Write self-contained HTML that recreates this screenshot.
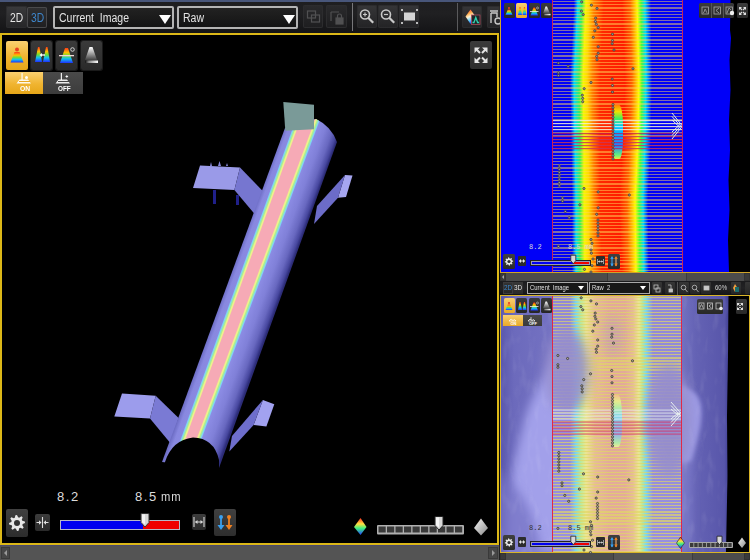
<!DOCTYPE html><html><head><meta charset="utf-8"><style>
*{margin:0;padding:0;box-sizing:border-box}
html,body{width:750px;height:560px;overflow:hidden;background:#0c0c0c;font-family:"Liberation Sans",sans-serif}
.a{position:absolute}
.btn{position:absolute;background:linear-gradient(#363638,#232325);border-radius:2px;box-shadow:inset 0 0 0 1px #2c2c2e}
.dd{position:absolute;border:2px solid #b4b4b4;border-radius:2px;background:linear-gradient(#222,#141414);color:#e4e4e4;overflow:hidden}
.dd span{position:absolute;left:4px;top:3px;font-size:12.5px;line-height:14px;transform:scaleX(.84);transform-origin:0 0;white-space:nowrap}
.tri{position:absolute;width:0;height:0;border-left:8px solid transparent;border-right:8px solid transparent;border-top:10px solid #fff}
svg{position:absolute;overflow:visible}
</style></head><body>
<div class="a" style="left:0;top:0;width:500px;height:33px;background:linear-gradient(#1e1e20,#202022 40%,#141416)"></div>
<div class="a" style="left:0;top:0;width:500px;height:1.5px;background:#48567a"></div>
<div class="btn" style="left:6px;top:6px;width:21px;height:22px;background:linear-gradient(#3a3a3c,#262628)"></div>
<div class="btn" style="left:27px;top:7px;width:20px;height:21px;background:linear-gradient(#303032,#1e1e20);box-shadow:inset 0 0 0 1px #4a4a4c"></div>
<div class="a" style="left:10px;top:11px;font-size:13.5px;line-height:13px;color:#e6e6e6;transform:scaleX(.76);transform-origin:0 0">2D</div>
<div class="a" style="left:31px;top:11px;font-size:13.5px;line-height:13px;color:#3e86cc;transform:scaleX(.76);transform-origin:0 0">3D</div>
<div class="dd" style="left:53px;top:6px;width:121px;height:23px"><span>Current&nbsp; Image</span><div class="tri" style="left:104px;top:7px;border-left-width:6px;border-right-width:6px;border-top-width:9px"></div></div>
<div class="dd" style="left:177px;top:6px;width:121px;height:23px"><span>Raw</span><div class="tri" style="left:104px;top:7px;border-left-width:6px;border-right-width:6px;border-top-width:9px"></div></div>
<div class="btn" style="left:303px;top:5px;width:20px;height:23px;background:linear-gradient(#2a2a2c,#1e1e20)"></div>
<div class="btn" style="left:326px;top:5px;width:21px;height:23px;background:linear-gradient(#2a2a2c,#1e1e20)"></div>
<svg style="left:303px;top:5px" width="20" height="23"><g fill="none" stroke="#505052" stroke-width="1.2"><rect x="4.5" y="6" width="8" height="7"/><rect x="8.5" y="10" width="8" height="7"/></g></svg>
<svg style="left:326px;top:5px" width="21" height="23"><g fill="none" stroke="#505052" stroke-width="1.2"><path d="M5 7h8M5 7v9"/><rect x="10" y="13" width="7" height="6" fill="#505052"/><path d="M11.5 13v-2a2 2 0 0 1 4 0v2"/></g></svg>
<div class="a" style="left:352px;top:3px;width:1px;height:28px;background:#77777a"></div>
<div class="btn" style="left:357px;top:5px;width:20px;height:23px"></div>
<div class="btn" style="left:378px;top:5px;width:20px;height:23px"></div>
<div class="btn" style="left:399px;top:5px;width:20px;height:23px"></div>
<svg style="left:357px;top:5px" width="20" height="23"><g fill="none" stroke="#c8c8c8" stroke-width="1.6"><circle cx="8" cy="9.5" r="4.5"/><path d="M11.2 12.8l5 5" stroke-width="2.2"/><path d="M6 9.5h4M8 7.5v4" stroke-width="1.2"/></g></svg>
<svg style="left:378px;top:5px" width="20" height="23"><g fill="none" stroke="#c8c8c8" stroke-width="1.6"><circle cx="8" cy="9.5" r="4.5"/><path d="M11.2 12.8l5 5" stroke-width="2.2"/><path d="M6 9.5h4" stroke-width="1.2"/></g></svg>
<svg style="left:399px;top:5px" width="21" height="23"><rect x="5" y="7.5" width="11" height="8" fill="#d4d4d4"/><g fill="#bbb"><rect x="2" y="4" width="2" height="2"/><rect x="17" y="4" width="2" height="2"/><rect x="2" y="17" width="2" height="2"/><rect x="17" y="17" width="2" height="2"/></g></svg>
<div class="a" style="left:457px;top:3px;width:1px;height:28px;background:#5a5a5c"></div>
<div class="btn" style="left:462px;top:6px;width:20px;height:22px"></div>
<svg style="left:462px;top:6px" width="20" height="22"><defs><linearGradient id="rb" x1=".2" y1="0" x2=".5" y2="1"><stop offset="0" stop-color="#ff4030"/><stop offset=".3" stop-color="#ffb050"/><stop offset=".5" stop-color="#fff0d0"/><stop offset=".75" stop-color="#60d0ff"/><stop offset="1" stop-color="#2040ff"/></linearGradient></defs><path d="M8.5 3.5l5 7-5 7.5-5-7.5z" fill="url(#rb)"/><rect x="9.5" y="9" width="8.5" height="9.5" fill="#1c2828" stroke="#b04a5a" stroke-width=".8"/><path d="M10.5 16.5h1.5l1.8-5 1.8 5h1.5" fill="none" stroke="#30d0b0" stroke-width="1.3"/></svg>
<div class="btn" style="left:487px;top:6px;width:13px;height:22px"></div>
<svg style="left:487px;top:6px" width="13" height="22"><g fill="none" stroke="#c8c8c8" stroke-width="1.4"><path d="M3 5h8M4 7v10M4 7h6v4"/><circle cx="11" cy="15" r="3"/></g></svg>
<div class="a" style="left:0;top:33px;width:499px;height:512px;background:#000;border:2px solid #dcb818;border-top-width:2px"></div>
<svg style="left:0;top:0" width="500" height="545" viewBox="0 0 500 545">
<defs>
<linearGradient id="rodg" gradientUnits="userSpaceOnUse" x1="221.25" y1="300" x2="272" y2="318.5">
<stop offset="0" stop-color="#6c6cc4"/><stop offset=".08" stop-color="#8888e0"/><stop offset=".5" stop-color="#9090e8"/>
<stop offset=".72" stop-color="#8080d8"/><stop offset=".86" stop-color="#6868c0"/><stop offset=".95" stop-color="#4848a0"/><stop offset="1" stop-color="#2c2c78"/>
</linearGradient>
<clipPath id="rodclip"><path d="M285,128 L162,462 L219,468 L337,142 Q331,126 316,119 Z"/></clipPath>
<filter id="sb" x="-20%" y="-5%" width="140%" height="110%"><feGaussianBlur stdDeviation=".7"/></filter>
</defs>
<polygon points="200,165.6 240,167.5 234.4,190 193,188" fill="#9a9ae8"/>
<polygon points="240,167.5 263,191.25 254.4,213.75 234.4,190" fill="#7676d0"/>
<path d="M213 190h3v14h-3zM236 195h3v10h-3z" fill="#20208a"/>
<path d="M210 166l1-4 1 4zM218 166l1.5-5 1.5 5zM226 166l1-3 1 3z" fill="#8888dd"/>
<polygon points="345,175 352.5,175.6 346,197 338,197.7" fill="#a6a6f0"/>
<polygon points="345,175 338,197.7 314,224 317,206" fill="#6c6cc8"/>
<polygon points="122,393.6 155.7,395.7 150,418.6 114.3,416.4" fill="#9c9cec"/>
<polygon points="155.7,395.7 178.6,417.9 170.7,443.6 150,418.6" fill="#7a7ad4"/>
<polygon points="262.9,400 274.3,404.3 266.4,426.4 253.6,425" fill="#a2a2f0"/>
<polygon points="262.9,400 253.6,425 229.3,451.4 232,436" fill="#6e6ecc"/>
<path d="M285,128 L162,462 L219,468 L337,142 Q331,126 316,119 Z" fill="url(#rodg)"/>
<g clip-path="url(#rodclip)"><g filter="url(#sb)">
<polygon points="299.3,110.0 323.5,110.0 188.1,475.0 167.9,475.0" fill="#80d4f4"/>
<polygon points="300.7,110.0 322.1,110.0 186.7,475.0 169.3,475.0" fill="#a8f094"/>
<polygon points="302.2,110.0 320.5,110.0 185.1,475.0 170.8,475.0" fill="#f0f08c"/>
<polygon points="303.9,110.0 318.7,110.0 183.3,475.0 172.5,475.0" fill="#f6aab6"/>
</g></g>
<path d="M165,462 Q172,440 193,437.5 Q214,438 219,460 L219,470 L165,470 Z" fill="#000"/>
<polygon points="283.3,102 314,104.7 314,129.3 285.3,130.7" fill="#7a9a98"/>
</svg>
<div class="a" style="left:6px;top:41px;width:22px;height:29px;border-radius:2px;background:linear-gradient(#fad070,#f0b430 55%,#e6a618)"></div>
<div class="a" style="left:31px;top:41px;width:21px;height:29px;border-radius:2px;background:linear-gradient(#3a3a3a,#2a2a2a);box-shadow:0 0 0 1px #1a1a1a"></div>
<div class="a" style="left:56px;top:41px;width:21px;height:29px;border-radius:2px;background:linear-gradient(#3a3a3a,#2a2a2a);box-shadow:0 0 0 1px #1a1a1a"></div>
<div class="a" style="left:81px;top:41px;width:21px;height:29px;border-radius:2px;background:linear-gradient(#3a3a3a,#2a2a2a);box-shadow:0 0 0 1px #1a1a1a"></div>
<svg style="left:0;top:0" width="110" height="100"><defs><linearGradient id="rbv" x1="0" y1="0" x2="0" y2="1"><stop offset="0" stop-color="#ff3818"/><stop offset=".3" stop-color="#ffc000"/><stop offset=".5" stop-color="#70e030"/><stop offset=".72" stop-color="#10c0f0"/><stop offset="1" stop-color="#2030ff"/></linearGradient><linearGradient id="cone" x1="0" y1="0" x2="0" y2="1"><stop offset="0" stop-color="#ffffff"/><stop offset=".3" stop-color="#c8c8c8"/><stop offset="1" stop-color="#404040"/></linearGradient><linearGradient id="conebar" x1="0" y1="0" x2="1" y2="0"><stop offset="0" stop-color="#101010"/><stop offset=".3" stop-color="#888"/><stop offset="1" stop-color="#fff"/></linearGradient></defs><circle cx="17" cy="49.5" r="2" fill="#e84020"/><polygon points="14.5,52 19.5,52 23.5,62.5 10.5,62.5" fill="url(#rbv)"/><polygon points="38,47 39.5,47 42,62 35,62" fill="url(#rbv)"/><polygon points="46,47 47.5,47 50,62 43,62" fill="url(#rbv)"/><path d="M45 55h-4" stroke="#fff" stroke-width="1.3"/><path d="M39.5 55l2.5-2v4z" fill="#fff"/><polygon points="65,48 68,48 73,63 60,63" fill="url(#rbv)"/><rect x="59" y="55" width="15" height="1.3" fill="#f0d8d8"/><circle cx="72.5" cy="49.5" r="1.8" fill="none" stroke="#ddd" stroke-width=".9"/><polygon points="89.5,47 92.5,47 97,60 85,60" fill="url(#cone)"/><rect x="85" y="60.5" width="13" height="2.5" fill="url(#conebar)"/></svg>
<div class="a" style="left:5px;top:72px;width:38px;height:22px;background:linear-gradient(#fad070,#f0b430 55%,#e6a618)"></div>
<div class="a" style="left:43px;top:72px;width:40px;height:22px;background:linear-gradient(#4a4a4a,#3c3c3c)"></div>
<svg style="left:0;top:0" width="90" height="100"><g fill="#fff"><path d="M19.5 79.5h8.5l3 4h-14.5z" opacity=".9"/><rect x="21.5" y="73" width="1.1" height="7"/><circle cx="26.5" cy="77.5" r="1.5"/><path d="M58.5 79.5h8.5l3 4h-14.5z" opacity=".9"/><rect x="60.8" y="73" width="1.1" height="7"/><path d="M65.5 76.5h2.6M66.8 75.2v2.6" stroke="#fff" stroke-width=".9"/></g><g fill="#e8a820"><rect x="19" y="81" width="11" height="1"/></g><g fill="#444"><rect x="58" y="81" width="11" height="1"/></g></svg>
<div class="a" style="left:19.5px;top:85px;font-size:7.5px;line-height:8px;font-weight:bold;color:#fff;transform:scaleX(.9);transform-origin:0 0">ON</div>
<div class="a" style="left:57.5px;top:85px;font-size:7.5px;line-height:8px;font-weight:bold;color:#fff;transform:scaleX(.85);transform-origin:0 0">OFF</div>
<div class="a" style="left:470px;top:41px;width:22px;height:28px;border-radius:2px;background:linear-gradient(#3a3a3a,#2c2c2c)"></div>
<svg style="left:470px;top:41px" width="22" height="28"><g fill="#e4e4e4"><path d="M4.5 6.5h5.5l-5.5 5.5zM17.5 6.5h-5.5l5.5 5.5zM4.5 22h5.5l-5.5-5.5zM17.5 22h-5.5l5.5-5.5z"/></g><g stroke="#e4e4e4" stroke-width="2"><path d="M6 8l4 4M16 8l-4 4M6 20.5l4-4M16 20.5l-4-4"/></g></svg>
<div class="a" style="left:6px;top:509px;width:22px;height:28px;border-radius:2px;background:linear-gradient(#404040,#2c2c2c)"></div>
<svg style="left:0;top:480px" width="260" height="65"><polygon points="24.84,41.41 25.00,42.97 22.65,44.10 22.33,45.18 23.67,47.42 22.68,48.64 20.22,47.78 19.22,48.31 18.59,50.84 17.03,51.00 15.90,48.65 14.82,48.33 12.58,49.67 11.36,48.68 12.22,46.22 11.69,45.22 9.16,44.59 9.00,43.03 11.35,41.90 11.67,40.82 10.33,38.58 11.32,37.36 13.78,38.22 14.78,37.69 15.41,35.16 16.97,35.00 18.10,37.35 19.18,37.67 21.42,36.33 22.64,37.32 21.78,39.78 22.31,40.78" fill="#e8e8e8"/><circle cx="17" cy="43" r="3" fill="#333"/></svg>
<div class="a" style="left:35px;top:514px;width:15px;height:17px;border-radius:2px;background:linear-gradient(#3c3c3c,#2a2a2a)"></div>
<svg style="left:35px;top:514px" width="15" height="17"><g stroke="#e0e0e0" fill="#e0e0e0" stroke-width="1.1"><path d="M7.5 3v11"/><path d="M1.5 8.5h4.5M13.5 8.5h-4.5"/><path d="M6.5 8.5l-2.5-2.2v4.4z M8.5 8.5l2.5-2.2v4.4z" stroke="none"/></g></svg>
<div class="a" style="left:60px;top:520px;width:120px;height:10px;border:1px solid #b8b8c8;background:linear-gradient(to right,#0000f0 0,#0000f0 82px,#f00000 82px)"></div>
<svg style="left:138px;top:511px" width="14" height="18"><path d="M3 2.5h8v9l-4 4.5-4-4.5z" fill="#d8d8d8" stroke="#333" stroke-width="1"/><path d="M4 3.5h3v10l-3-2.5z" fill="#f4f4f4"/></svg>
<div class="a" style="left:57px;top:489.5px;font-size:13px;line-height:13px;letter-spacing:1.6px;color:#dcdcdc;white-space:pre">8.2</div>
<div class="a" style="left:135px;top:489.5px;font-size:13px;line-height:13px;letter-spacing:1.6px;color:#dcdcdc;white-space:pre">8.5</div>
<div class="a" style="left:160.5px;top:489.5px;font-size:13px;line-height:13px;letter-spacing:1.2px;color:#dcdcdc;white-space:pre;transform:scaleX(.86);transform-origin:0 0">mm</div>
<div class="a" style="left:192px;top:514px;width:14px;height:16px;border-radius:2px;background:linear-gradient(#3c3c3c,#2a2a2a)"></div>
<svg style="left:192px;top:514px" width="14" height="16"><g stroke="#d8d8d8" fill="#d8d8d8" stroke-width="1.1"><path d="M2 3v10M12 3v10M3.5 8h7"/><path d="M3 8l2.5-2v4zM11 8l-2.5-2v4z" stroke="none"/></g></svg>
<div class="a" style="left:214px;top:509px;width:22px;height:27px;border-radius:2px;background:linear-gradient(#404040,#2e2e2e)"></div>
<svg style="left:214px;top:509px" width="22" height="27"><g stroke-width="1.8"><circle cx="7" cy="8" r="2" fill="#3aa0f0"/><path d="M7 9v10" stroke="#3aa0f0"/><path d="M3.5 16l3.5 5 3.5-5z" fill="#3aa0f0"/><circle cx="15" cy="8" r="2" fill="#f08020"/><path d="M15 9v10" stroke="#f08020"/><path d="M11.5 16l3.5 5 3.5-5z" fill="#f08020"/></g></svg>
<svg style="left:350px;top:514px" width="20" height="24"><defs><linearGradient id="dia" x1="0" y1="0" x2="0" y2="1"><stop offset="0" stop-color="#ff3020"/><stop offset=".35" stop-color="#ffe040"/><stop offset=".6" stop-color="#40f080"/><stop offset="1" stop-color="#2040ff"/></linearGradient></defs><path d="M10.5 4l6 9-6 8-6.5-8z" fill="url(#dia)"/></svg>
<svg style="left:377px;top:525px" width="87" height="10"><rect x="0" y="0" width="87" height="9.5" rx="1" fill="#b0b0b0"/><rect x="1.50" y="1.5" width="7.2" height="6" fill="#3a3a3a"/><rect x="10.00" y="1.5" width="7.2" height="6" fill="#3a3a3a"/><rect x="18.50" y="1.5" width="7.2" height="6" fill="#3a3a3a"/><rect x="27.00" y="1.5" width="7.2" height="6" fill="#3a3a3a"/><rect x="35.50" y="1.5" width="7.2" height="6" fill="#3a3a3a"/><rect x="44.00" y="1.5" width="7.2" height="6" fill="#3a3a3a"/><rect x="52.50" y="1.5" width="7.2" height="6" fill="#3a3a3a"/><rect x="61.00" y="1.5" width="7.2" height="6" fill="#3a3a3a"/><rect x="69.50" y="1.5" width="7.2" height="6" fill="#3a3a3a"/><rect x="78.00" y="1.5" width="7.2" height="6" fill="#3a3a3a"/></svg>
<svg style="left:432px;top:514px" width="14" height="18"><path d="M3 2.5h8v9l-4 4.5-4-4.5z" fill="#d8d8d8" stroke="#222" stroke-width="1"/><path d="M4 3.5h3v10l-3-2.5z" fill="#f4f4f4"/></svg>
<svg style="left:470px;top:514px" width="22" height="24"><defs><linearGradient id="gd" x1="0" y1="0" x2="1" y2="1"><stop offset="0" stop-color="#f8f8f8"/><stop offset="1" stop-color="#888"/></linearGradient></defs><path d="M11 4.5l7 9.5-7 7.5-7-7.5z" fill="url(#gd)"/></svg>
<div class="a" style="left:0;top:545px;width:499px;height:15px;background:#545454;border-top:1px solid #4a4a70"></div>
<div class="a" style="left:1px;top:547px;width:9px;height:12px;background:#474747;border:1px solid #3a3a3a"></div>
<svg style="left:1px;top:547px" width="9" height="12"><path d="M6 3l-3 3 3 3z" fill="#999"/></svg>
<div class="a" style="left:488px;top:547px;width:10px;height:12px;background:#474747;border:1px solid #3a3a3a"></div>
<svg style="left:488px;top:547px" width="10" height="12"><path d="M4 3l3 3-3 3z" fill="#999"/></svg>
<div class="a" style="left:499px;top:545px;width:1px;height:15px;background:#222"></div>
<div class="a" style="left:500px;top:0;width:250px;height:273px;background:#000"></div>
<svg style="left:500px;top:0" width="250" height="273"><path d="M1 0H230.5L230 30L231 38L229.5 60L230.5 90L229 120L230 150L228.5 180L229.5 210L228 240L229 272H1Z" fill="#0000f8"/></svg>
<div class="a" style="left:553px;top:0;width:129px;height:272px"><div style="position:absolute;left:0;top:0px;width:129px;height:8px;background:linear-gradient(to right,#0000f8 20.8px,#00d8ff 24.8px,#30f060 28.9px,#f8f800 32.9px,#ffd800 35.9px,#ff8000 40.9px,#ff2800 50.8px,#ff1c00 69.1px,#ff6000 77.1px,#ffff00 84.1px,#40ff40 88.0px,#00d8ff 92.0px,#0000f8 98.0px)"></div><div style="position:absolute;left:0;top:8px;width:129px;height:8px;background:linear-gradient(to right,#0000f8 20.4px,#00d8ff 24.4px,#30f060 28.5px,#f8f800 32.5px,#ffd800 35.7px,#ff8000 40.7px,#ff2800 50.4px,#ff1c00 69.5px,#ff6000 77.3px,#ffff00 84.3px,#40ff40 88.1px,#00d8ff 92.1px,#0000f8 98.1px)"></div><div style="position:absolute;left:0;top:16px;width:129px;height:8px;background:linear-gradient(to right,#0000f8 20.0px,#00d8ff 24.0px,#30f060 28.2px,#f8f800 32.2px,#ffd800 35.5px,#ff8000 40.5px,#ff2800 50.0px,#ff1c00 69.8px,#ff6000 77.5px,#ffff00 84.5px,#40ff40 88.2px,#00d8ff 92.2px,#0000f8 98.2px)"></div><div style="position:absolute;left:0;top:24px;width:129px;height:8px;background:linear-gradient(to right,#0000f8 19.6px,#00d8ff 23.6px,#30f060 28.0px,#f8f800 32.0px,#ffd800 35.3px,#ff8000 40.3px,#ff2800 49.6px,#ff1c00 70.0px,#ff6000 77.7px,#ffff00 84.7px,#40ff40 88.4px,#00d8ff 92.4px,#0000f8 98.4px)"></div><div style="position:absolute;left:0;top:32px;width:129px;height:8px;background:linear-gradient(to right,#0000f8 19.2px,#00d8ff 23.2px,#30f060 27.6px,#f8f800 31.6px,#ffd800 35.1px,#ff8000 40.1px,#ff2800 49.2px,#ff1c00 70.4px,#ff6000 77.9px,#ffff00 84.9px,#40ff40 88.5px,#00d8ff 92.5px,#0000f8 98.5px)"></div><div style="position:absolute;left:0;top:40px;width:129px;height:8px;background:linear-gradient(to right,#0000f8 18.8px,#00d8ff 22.8px,#30f060 27.4px,#f8f800 31.4px,#ffd800 34.9px,#ff8000 39.9px,#ff2800 48.8px,#ff1c00 70.6px,#ff6000 78.1px,#ffff00 85.1px,#40ff40 88.5px,#00d8ff 92.5px,#0000f8 98.5px)"></div><div style="position:absolute;left:0;top:48px;width:129px;height:8px;background:linear-gradient(to right,#0000f8 18.4px,#00d8ff 22.4px,#30f060 27.0px,#f8f800 31.0px,#ffd800 34.7px,#ff8000 39.7px,#ff2800 48.4px,#ff1c00 71.0px,#ff6000 78.3px,#ffff00 85.3px,#40ff40 88.6px,#00d8ff 92.6px,#0000f8 98.6px)"></div><div style="position:absolute;left:0;top:56px;width:129px;height:8px;background:linear-gradient(to right,#0000f8 18.0px,#00d8ff 22.0px,#30f060 26.8px,#f8f800 30.8px,#ffd800 34.5px,#ff8000 39.5px,#ff2800 48.0px,#ff1c00 71.2px,#ff6000 78.5px,#ffff00 85.5px,#40ff40 88.8px,#00d8ff 92.8px,#0000f8 98.8px)"></div><div style="position:absolute;left:0;top:64px;width:129px;height:8px;background:linear-gradient(to right,#0000f8 17.6px,#00d8ff 21.6px,#30f060 26.5px,#f8f800 30.5px,#ffd800 34.3px,#ff8000 39.3px,#ff2800 47.6px,#ff1c00 71.5px,#ff6000 78.7px,#ffff00 85.7px,#40ff40 88.9px,#00d8ff 92.9px,#0000f8 98.9px)"></div><div style="position:absolute;left:0;top:72px;width:129px;height:8px;background:linear-gradient(to right,#0000f8 17.2px,#00d8ff 21.2px,#30f060 26.1px,#f8f800 30.1px,#ffd800 34.1px,#ff8000 39.1px,#ff2800 47.2px,#ff1c00 71.9px,#ff6000 78.9px,#ffff00 85.9px,#40ff40 89.0px,#00d8ff 93.0px,#0000f8 99.0px)"></div><div style="position:absolute;left:0;top:80px;width:129px;height:8px;background:linear-gradient(to right,#0000f8 17.1px,#00d8ff 21.1px,#30f060 26.1px,#f8f800 30.1px,#ffd800 34.1px,#ff8000 39.1px,#ff2800 47.0px,#ff1c00 71.9px,#ff6000 78.9px,#ffff00 85.9px,#40ff40 88.9px,#00d8ff 92.9px,#0000f8 98.9px)"></div><div style="position:absolute;left:0;top:88px;width:129px;height:8px;background:linear-gradient(to right,#0000f8 17.2px,#00d8ff 21.2px,#30f060 26.2px,#f8f800 30.2px,#ffd800 34.2px,#ff8000 39.2px,#ff2800 47.0px,#ff1c00 71.6px,#ff6000 78.6px,#ffff00 85.8px,#40ff40 88.8px,#00d8ff 92.8px,#0000f8 98.8px)"></div><div style="position:absolute;left:0;top:96px;width:129px;height:8px;background:linear-gradient(to right,#0000f8 17.3px,#00d8ff 21.3px,#30f060 26.3px,#f8f800 30.3px,#ffd800 34.3px,#ff8000 39.3px,#ff2800 47.0px,#ff1c00 71.3px,#ff6000 78.3px,#ffff00 85.7px,#40ff40 88.7px,#00d8ff 92.7px,#0000f8 98.7px)"></div><div style="position:absolute;left:0;top:104px;width:129px;height:8px;background:linear-gradient(to right,#0000f8 17.5px,#00d8ff 21.5px,#30f060 26.5px,#f8f800 30.5px,#ffd800 34.5px,#ff8000 39.5px,#ff2800 47.0px,#ff1c00 71.1px,#ff6000 78.1px,#ffff00 85.5px,#40ff40 88.5px,#00d8ff 92.5px,#0000f8 98.5px)"></div><div style="position:absolute;left:0;top:112px;width:129px;height:8px;background:linear-gradient(to right,#0000f8 17.6px,#00d8ff 21.6px,#30f060 26.6px,#f8f800 30.6px,#ffd800 34.6px,#ff8000 39.6px,#ff2800 47.0px,#ff1c00 70.8px,#ff6000 77.8px,#ffff00 85.4px,#40ff40 88.4px,#00d8ff 92.4px,#0000f8 98.4px)"></div><div style="position:absolute;left:0;top:120px;width:129px;height:8px;background:linear-gradient(to right,#0000f8 17.7px,#00d8ff 21.7px,#30f060 26.7px,#f8f800 30.7px,#ffd800 34.7px,#ff8000 39.7px,#ff2800 47.0px,#ff1c00 70.5px,#ff6000 77.5px,#ffff00 85.3px,#40ff40 88.3px,#00d8ff 92.3px,#0000f8 98.3px)"></div><div style="position:absolute;left:0;top:128px;width:129px;height:8px;background:linear-gradient(to right,#0000f8 17.9px,#00d8ff 21.9px,#30f060 26.9px,#f8f800 30.9px,#ffd800 34.9px,#ff8000 39.9px,#ff2800 47.0px,#ff1c00 70.3px,#ff6000 77.3px,#ffff00 85.1px,#40ff40 88.1px,#00d8ff 92.1px,#0000f8 98.1px)"></div><div style="position:absolute;left:0;top:136px;width:129px;height:8px;background:linear-gradient(to right,#0000f8 18.0px,#00d8ff 22.0px,#30f060 27.0px,#f8f800 31.0px,#ffd800 35.0px,#ff8000 40.0px,#ff2800 47.0px,#ff1c00 70.0px,#ff6000 77.0px,#ffff00 85.0px,#40ff40 88.0px,#00d8ff 92.0px,#0000f8 98.0px)"></div><div style="position:absolute;left:0;top:144px;width:129px;height:8px;background:linear-gradient(to right,#0000f8 18.1px,#00d8ff 22.1px,#30f060 27.0px,#f8f800 31.0px,#ffd800 35.1px,#ff8000 40.1px,#ff2800 47.0px,#ff1c00 69.5px,#ff6000 76.6px,#ffff00 84.6px,#40ff40 87.7px,#00d8ff 91.7px,#0000f8 97.6px)"></div><div style="position:absolute;left:0;top:152px;width:129px;height:8px;background:linear-gradient(to right,#0000f8 18.3px,#00d8ff 22.3px,#30f060 27.0px,#f8f800 31.0px,#ffd800 35.3px,#ff8000 40.3px,#ff2800 47.0px,#ff1c00 68.9px,#ff6000 76.2px,#ffff00 84.2px,#40ff40 87.5px,#00d8ff 91.5px,#0000f8 97.2px)"></div><div style="position:absolute;left:0;top:160px;width:129px;height:8px;background:linear-gradient(to right,#0000f8 18.4px,#00d8ff 22.4px,#30f060 27.0px,#f8f800 31.0px,#ffd800 35.4px,#ff8000 40.4px,#ff2800 47.0px,#ff1c00 68.4px,#ff6000 75.8px,#ffff00 83.8px,#40ff40 87.2px,#00d8ff 91.2px,#0000f8 96.8px)"></div><div style="position:absolute;left:0;top:168px;width:129px;height:8px;background:linear-gradient(to right,#0000f8 18.5px,#00d8ff 22.5px,#30f060 27.0px,#f8f800 31.0px,#ffd800 35.5px,#ff8000 40.5px,#ff2800 47.0px,#ff1c00 67.9px,#ff6000 75.4px,#ffff00 83.4px,#40ff40 86.9px,#00d8ff 90.9px,#0000f8 96.4px)"></div><div style="position:absolute;left:0;top:176px;width:129px;height:8px;background:linear-gradient(to right,#0000f8 18.7px,#00d8ff 22.7px,#30f060 27.0px,#f8f800 31.0px,#ffd800 35.7px,#ff8000 40.7px,#ff2800 47.0px,#ff1c00 67.3px,#ff6000 75.0px,#ffff00 83.0px,#40ff40 86.7px,#00d8ff 90.7px,#0000f8 96.0px)"></div><div style="position:absolute;left:0;top:184px;width:129px;height:8px;background:linear-gradient(to right,#0000f8 18.8px,#00d8ff 22.8px,#30f060 27.0px,#f8f800 31.0px,#ffd800 35.8px,#ff8000 40.8px,#ff2800 47.0px,#ff1c00 66.8px,#ff6000 74.6px,#ffff00 82.6px,#40ff40 86.4px,#00d8ff 90.4px,#0000f8 95.6px)"></div><div style="position:absolute;left:0;top:192px;width:129px;height:8px;background:linear-gradient(to right,#0000f8 18.9px,#00d8ff 22.9px,#30f060 27.0px,#f8f800 31.0px,#ffd800 35.9px,#ff8000 40.9px,#ff2800 47.0px,#ff1c00 66.3px,#ff6000 74.2px,#ffff00 82.2px,#40ff40 86.1px,#00d8ff 90.1px,#0000f8 95.2px)"></div><div style="position:absolute;left:0;top:200px;width:129px;height:8px;background:linear-gradient(to right,#0000f8 19.0px,#00d8ff 23.0px,#30f060 27.0px,#f8f800 31.1px,#ffd800 35.9px,#ff8000 41.0px,#ff2800 47.1px,#ff1c00 66.2px,#ff6000 74.1px,#ffff00 82.1px,#40ff40 86.1px,#00d8ff 90.1px,#0000f8 95.1px)"></div><div style="position:absolute;left:0;top:208px;width:129px;height:8px;background:linear-gradient(to right,#0000f8 19.0px,#00d8ff 23.0px,#30f060 27.0px,#f8f800 31.2px,#ffd800 35.8px,#ff8000 41.0px,#ff2800 47.3px,#ff1c00 66.5px,#ff6000 74.2px,#ffff00 82.2px,#40ff40 86.2px,#00d8ff 90.2px,#0000f8 95.2px)"></div><div style="position:absolute;left:0;top:216px;width:129px;height:8px;background:linear-gradient(to right,#0000f8 19.0px,#00d8ff 23.0px,#30f060 27.0px,#f8f800 31.3px,#ffd800 35.7px,#ff8000 41.0px,#ff2800 47.6px,#ff1c00 66.8px,#ff6000 74.3px,#ffff00 82.3px,#40ff40 86.3px,#00d8ff 90.3px,#0000f8 95.3px)"></div><div style="position:absolute;left:0;top:224px;width:129px;height:8px;background:linear-gradient(to right,#0000f8 19.0px,#00d8ff 23.0px,#30f060 27.0px,#f8f800 31.4px,#ffd800 35.6px,#ff8000 41.0px,#ff2800 47.8px,#ff1c00 67.2px,#ff6000 74.4px,#ffff00 82.4px,#40ff40 86.4px,#00d8ff 90.4px,#0000f8 95.4px)"></div><div style="position:absolute;left:0;top:232px;width:129px;height:8px;background:linear-gradient(to right,#0000f8 19.0px,#00d8ff 23.0px,#30f060 27.0px,#f8f800 31.5px,#ffd800 35.5px,#ff8000 41.0px,#ff2800 48.0px,#ff1c00 67.5px,#ff6000 74.5px,#ffff00 82.5px,#40ff40 86.5px,#00d8ff 90.5px,#0000f8 95.5px)"></div><div style="position:absolute;left:0;top:240px;width:129px;height:8px;background:linear-gradient(to right,#0000f8 19.0px,#00d8ff 23.0px,#30f060 27.0px,#f8f800 31.6px,#ffd800 35.4px,#ff8000 41.0px,#ff2800 48.2px,#ff1c00 67.8px,#ff6000 74.6px,#ffff00 82.6px,#40ff40 86.6px,#00d8ff 90.6px,#0000f8 95.6px)"></div><div style="position:absolute;left:0;top:248px;width:129px;height:8px;background:linear-gradient(to right,#0000f8 19.0px,#00d8ff 23.0px,#30f060 27.0px,#f8f800 31.7px,#ffd800 35.3px,#ff8000 41.0px,#ff2800 48.4px,#ff1c00 68.2px,#ff6000 74.7px,#ffff00 82.7px,#40ff40 86.7px,#00d8ff 90.7px,#0000f8 95.7px)"></div><div style="position:absolute;left:0;top:256px;width:129px;height:8px;background:linear-gradient(to right,#0000f8 19.0px,#00d8ff 23.0px,#30f060 27.0px,#f8f800 31.8px,#ffd800 35.2px,#ff8000 41.0px,#ff2800 48.7px,#ff1c00 68.5px,#ff6000 74.8px,#ffff00 82.8px,#40ff40 86.8px,#00d8ff 90.8px,#0000f8 95.8px)"></div><div style="position:absolute;left:0;top:264px;width:129px;height:8px;background:linear-gradient(to right,#0000f8 19.0px,#00d8ff 23.0px,#30f060 27.0px,#f8f800 31.9px,#ffd800 35.1px,#ff8000 41.0px,#ff2800 48.9px,#ff1c00 68.8px,#ff6000 74.9px,#ffff00 82.9px,#40ff40 86.9px,#00d8ff 90.9px,#0000f8 95.9px)"></div><div style="position:absolute;left:0;top:0;width:129px;height:272px;background:repeating-linear-gradient(to bottom,rgba(0,0,0,0) 0 1px,rgba(255,215,90,.5) 1px 2.3px,rgba(0,0,0,0) 2.3px 3.2px)"></div></div>
<div class="a" style="left:614px;top:105px;width:9px;height:54px;border-radius:0 4px 4px 0/0 20px 20px 0;background:linear-gradient(#ff8000,#f0e000 12%,#40f060 25%,#00c8ff 40%,#2080ff 75%,#60f080 92%,#e0f040)"></div>
<svg style="left:553px;top:0" width="129" height="273"><rect x="0" y="120" width="129" height="1.2" fill="rgba(240,240,230,.75)"/><rect x="0" y="123" width="129" height="1.2" fill="rgba(240,240,230,.75)"/><rect x="0" y="126" width="129" height="1.2" fill="rgba(240,240,230,.75)"/><rect x="0" y="129" width="129" height="1.2" fill="rgba(240,240,230,.75)"/><rect x="0" y="133" width="129" height="1.2" fill="rgba(190,20,90,.7)"/><rect x="0" y="136" width="129" height="1.2" fill="rgba(190,20,90,.7)"/><rect x="0" y="139" width="129" height="1.2" fill="rgba(190,20,90,.7)"/><rect x="0" y="142" width="129" height="1.2" fill="rgba(190,20,90,.7)"/><rect x="0" y="145" width="129" height="1.2" fill="rgba(190,20,90,.7)"/><rect x="0" y="148" width="129" height="1.2" fill="rgba(190,20,90,.7)"/><g fill="none" stroke="#e0f0e8" stroke-width="1"><path d="M119 113l10 12.5M119 116.5l9 10M119 120l7 6.5M119 139l10 -12.5M119 135.5l9 -10M119 132l7 -6.5"/></g></svg>
<div class="a" style="left:552px;top:0;width:1px;height:272px;background:#c81e5a"></div>
<div class="a" style="left:682px;top:0;width:1px;height:272px;background:#c81e5a"></div>
<div class="a" style="left:500px;top:0;width:1px;height:273px;background:#d0a428"></div>
<div class="a" style="left:500px;top:272px;width:250px;height:1px;background:#d0a428"></div>
<svg style="left:500px;top:0px" width="250" height="273"><g fill="#9a9a9a" stroke="#3a3a3a" stroke-width=".75"><circle cx="81.7" cy="1.9" r="1.1"/><circle cx="91.4" cy="5.2" r="1.1"/><circle cx="97.0" cy="8.4" r="1.1"/><circle cx="81.4" cy="11.2" r="1.1"/><circle cx="83.2" cy="14.6" r="1.1"/><circle cx="95.7" cy="18.1" r="1.1"/><circle cx="95.4" cy="21.5" r="1.1"/><circle cx="96.3" cy="24.3" r="1.1"/><circle cx="98.2" cy="27.6" r="1.1"/><circle cx="94.8" cy="30.8" r="1.1"/><circle cx="112.5" cy="34.2" r="1.1"/><circle cx="93.3" cy="37.3" r="1.1"/><circle cx="112.5" cy="40.5" r="1.1"/><circle cx="112.2" cy="43.7" r="1.1"/><circle cx="98.2" cy="46.7" r="1.1"/><circle cx="114.0" cy="50.0" r="1.1"/><circle cx="98.2" cy="53.2" r="1.1"/><circle cx="96.7" cy="56.4" r="1.1"/><circle cx="97.0" cy="59.7" r="1.1"/><circle cx="58.4" cy="63.1" r="1.1"/><circle cx="68.1" cy="66.3" r="1.1"/><circle cx="133.0" cy="68.7" r="1.1"/><circle cx="58.4" cy="72.8" r="1.1"/><circle cx="58.4" cy="75.6" r="1.1"/><circle cx="112.2" cy="79.0" r="1.1"/><circle cx="91.0" cy="82.5" r="1.1"/><circle cx="112.5" cy="85.5" r="1.1"/><circle cx="84.2" cy="88.7" r="1.1"/><circle cx="112.5" cy="92.0" r="1.1"/><circle cx="82.3" cy="95.2" r="1.1"/><circle cx="82.7" cy="98.4" r="1.1"/><circle cx="82.7" cy="101.7" r="1.1"/><circle cx="113.0" cy="104.5" r="1.1"/><circle cx="113.0" cy="107.7" r="1.1"/><circle cx="113.0" cy="110.9" r="1.1"/><circle cx="113.0" cy="114.1" r="1.1"/><circle cx="113.0" cy="117.3" r="1.1"/><circle cx="113.0" cy="120.5" r="1.1"/><circle cx="113.0" cy="123.7" r="1.1"/><circle cx="113.0" cy="126.9" r="1.1"/><circle cx="113.0" cy="130.1" r="1.1"/><circle cx="113.0" cy="133.3" r="1.1"/><circle cx="113.0" cy="136.5" r="1.1"/><circle cx="113.0" cy="139.7" r="1.1"/><circle cx="113.0" cy="142.9" r="1.1"/><circle cx="113.0" cy="146.1" r="1.1"/><circle cx="113.0" cy="149.3" r="1.1"/><circle cx="113.0" cy="152.5" r="1.1"/><circle cx="113.0" cy="155.7" r="1.1"/><circle cx="113.0" cy="158.9" r="1.1"/><circle cx="59.3" cy="166.0" r="1.1"/><circle cx="59.3" cy="169.3" r="1.1"/><circle cx="59.3" cy="172.6" r="1.1"/><circle cx="59.3" cy="175.9" r="1.1"/><circle cx="59.3" cy="179.2" r="1.1"/><circle cx="59.3" cy="182.5" r="1.1"/><circle cx="59.3" cy="185.8" r="1.1"/><circle cx="84.0" cy="188.5" r="1.1"/><circle cx="98.2" cy="191.9" r="1.1"/><circle cx="129.3" cy="195.0" r="1.1"/><circle cx="62.5" cy="198.2" r="1.1"/><circle cx="62.5" cy="201.2" r="1.1"/><circle cx="79.9" cy="204.8" r="1.1"/><circle cx="98.2" cy="207.8" r="1.1"/><circle cx="65.3" cy="211.5" r="1.1"/><circle cx="96.7" cy="214.3" r="1.1"/><circle cx="69.2" cy="217.7" r="1.1"/><circle cx="98.0" cy="220.0" r="1.1"/><circle cx="98.0" cy="223.2" r="1.1"/><circle cx="98.0" cy="226.4" r="1.1"/><circle cx="98.0" cy="229.6" r="1.1"/><circle cx="98.0" cy="232.8" r="1.1"/><circle cx="98.0" cy="236.0" r="1.1"/><circle cx="91.0" cy="239.5" r="1.1"/><circle cx="92.0" cy="243.3" r="1.1"/><circle cx="58.4" cy="246.4" r="1.1"/><circle cx="91.0" cy="249.8" r="1.1"/><circle cx="91.4" cy="253.2" r="1.1"/><circle cx="93.0" cy="259.0" r="1.1"/><circle cx="92.0" cy="265.7" r="1.1"/><circle cx="84.5" cy="269.4" r="1.1"/><circle cx="91.0" cy="272.0" r="1.1"/></g></svg>
<div class="a" style="left:503.5px;top:3px;width:11px;height:15px;border-radius:1.5px;background:linear-gradient(#3a3a3a,#262626)"></div><div class="a" style="left:516px;top:3px;width:11px;height:15px;border-radius:1.5px;background:linear-gradient(#f8d070,#e8a828)"></div><div class="a" style="left:528.5px;top:3px;width:11px;height:15px;border-radius:1.5px;background:linear-gradient(#3a3a3a,#262626)"></div><div class="a" style="left:541px;top:3px;width:11px;height:15px;border-radius:1.5px;background:linear-gradient(#3a3a3a,#262626)"></div><svg style="left:500px;top:3px" width="60" height="20"><circle cx="9" cy="5" r="1.1" fill="#e84020"/><polygon points="7.8,6.5 10.2,6.5 12.5,12 5.5,12" fill="url(#rbv)"/><polygon points="19.5,4 20.5,4 22,12 18,12" fill="url(#rbv)"/><polygon points="24,4 25,4 26.5,12 22.5,12" fill="url(#rbv)"/><polygon points="33.5,4.5 35,4.5 38,12.5 30.5,12.5" fill="url(#rbv)"/><rect x="30" y="8" width="8.5" height=".8" fill="#eee"/><circle cx="37.5" cy="5" r="1" fill="none" stroke="#ccc" stroke-width=".6"/><polygon points="45.5,3.5 47,3.5 50,10.5 43,10.5" fill="url(#cone)"/><rect x="43" y="10.8" width="7.5" height="1.5" fill="url(#conebar)"/></svg>
<div class="a" style="left:699px;top:3px;width:35px;height:15px;border-radius:1.5px;background:linear-gradient(#3c3c3c,#282828)"></div>
<div class="a" style="left:711px;top:3px;width:1px;height:15px;background:#555"></div><div class="a" style="left:723px;top:3px;width:1px;height:15px;background:#555"></div>
<div class="a" style="left:737px;top:3px;width:11px;height:15px;border-radius:1.5px;background:linear-gradient(#3c3c3c,#282828)"></div>
<svg style="left:699px;top:3px" width="50" height="15"><g fill="none" stroke="#a8a8a8" stroke-width=".8"><rect x="3" y="4" width="6.5" height="7"/><path d="M4 10c1.5 0 1.5-4 2.2-4s.8 4 2.2 4"/><rect x="15" y="4" width="6.5" height="7"/><path d="M20 5l-3 2.5 3 2.5"/><rect x="27" y="4" width="6.5" height="7"/><path d="M28 10l2-5 2 2"/></g><circle cx="33" cy="10" r="2.2" fill="#eee"/><g fill="#ddd"><path d="M40 4h3l-3 3zM47 4h-3l3 3zM40 12h3l-3-3zM47 12h-3l3-3z"/></g><g stroke="#ddd" stroke-width="1.1"><path d="M41 5l2 2M46 5l-2 2M41 11l2-2M46 11l-2-2"/></g></svg>
<div class="a" style="left:503px;top:254px;width:11.5px;height:15px;border-radius:1.5px;background:linear-gradient(#404040,#2a2a2a)"></div><svg style="left:500px;top:224px" width="130" height="50"><polygon points="13.12,36.67 13.20,37.48 11.97,38.08 11.80,38.65 12.50,39.82 11.98,40.46 10.69,40.01 10.17,40.29 9.83,41.62 9.02,41.70 8.42,40.47 7.85,40.30 6.68,41.00 6.04,40.48 6.49,39.19 6.21,38.67 4.88,38.33 4.80,37.52 6.03,36.92 6.20,36.35 5.50,35.18 6.02,34.54 7.31,34.99 7.83,34.71 8.17,33.38 8.98,33.30 9.58,34.53 10.15,34.70 11.32,34.00 11.96,34.52 11.51,35.81 11.79,36.33" fill="#e8e8e8"/><circle cx="9" cy="37.5" r="1.6" fill="#333"/></svg><div class="a" style="left:518px;top:256px;width:8px;height:10px;border-radius:1px;background:#2c2c2c"></div><svg style="left:518px;top:256px" width="8" height="10"><path d="M.8 5l2.2-2v4zM7.2 5l-2.2-2v4z" fill="#e8e8e8"/><path d="M2.5 5h3" stroke="#e8e8e8" stroke-width="1"/></svg><div class="a" style="left:530px;top:259.5px;width:61px;height:6.5px;border:1px solid #222;box-shadow:inset 0 0 0 1px #9898b8;background:linear-gradient(to right,#0000f0 0,#0000f0 42px,#f00000 42px)"></div><svg style="left:569px;top:254px" width="9" height="11"><path d="M1.8 1.2h5v5.5l-2.5 3-2.5-3z" fill="#d8d8d8" stroke="#222" stroke-width=".8"/></svg><div class="a" style="left:529px;top:244px;font-family:'Liberation Mono',monospace;font-size:7px;line-height:7px;color:#d8d8d8">8.2</div><div class="a" style="left:568px;top:244px;font-family:'Liberation Mono',monospace;font-size:7px;line-height:7px;color:#d8d8d8">8.5 mm</div><div class="a" style="left:596px;top:255.5px;width:9px;height:10.5px;border-radius:1px;background:#2c2c2c"></div><svg style="left:596px;top:255.5px" width="9" height="11"><path d="M1.5 3v5M7.5 3v5M2 5.5h5" stroke="#ccc" stroke-width=".7"/><path d="M2.2 5.5l1.5-1.2v2.4zM6.8 5.5l-1.5-1.2v2.4z" fill="#ddd"/></svg><div class="a" style="left:608px;top:254px;width:11.5px;height:15px;border-radius:1.5px;background:linear-gradient(#404040,#2a2a2a)"></div><svg style="left:608px;top:254px" width="12" height="15"><path d="M4 3v9M8 3v9" stroke-width="1.1" stroke="#3aa0f0"/><path d="M8 3v9" stroke-width="1.1" stroke="#f08020"/><path d="M2.3 9.5l1.7 3 1.7-3zM2.3 5l1.7-3 1.7 3z" fill="#3aa0f0"/><path d="M6.3 9.5l1.7 3 1.7-3zM6.3 5l1.7-3 1.7 3z" fill="#f08020"/></svg>
<div class="a" style="left:500px;top:273px;width:250px;height:8px;background:#4c4c4c"></div>
<div class="a" style="left:500px;top:273px;width:6px;height:8px;background:#3a3a3a;border:1px solid #333"></div>
<svg style="left:500px;top:273px" width="6" height="8"><path d="M4 2l-2 2 2 2z" fill="#aaa"/></svg>
<div class="a" style="left:607px;top:273px;width:80px;height:8px;background:#555;border-left:1px solid #3c3c3c;border-right:1px solid #3c3c3c"></div>
<div class="a" style="left:744px;top:273px;width:6px;height:8px;background:#3a3a3a;border:1px solid #333"></div>
<div class="a" style="left:500px;top:281px;width:250px;height:14px;background:linear-gradient(#1c1c1e,#222224 50%,#151517)"></div>
<div class="a" style="left:503px;top:282px;width:10px;height:12px;background:linear-gradient(#333,#262626);border:1px solid #3c3c3e"></div>
<div class="a" style="left:513px;top:282px;width:10px;height:12px;background:linear-gradient(#383838,#2a2a2a)"></div>
<div class="a" style="left:504px;top:284px;font-size:8px;line-height:8px;color:#3a86cc;transform:scaleX(.8);transform-origin:0 0">2D</div>
<div class="a" style="left:514px;top:284px;font-size:8px;line-height:8px;color:#e0e0e0;transform:scaleX(.8);transform-origin:0 0">3D</div>
<div class="a" style="left:527px;top:281.5px;width:61px;height:12px;border:1px solid #a8a8a8;background:#181818"></div>
<div class="a" style="left:530px;top:284px;font-size:7.5px;line-height:8px;color:#e0e0e0;transform:scaleX(.78);transform-origin:0 0;white-space:nowrap">Current&nbsp; Image</div>
<div class="tri" style="left:578px;top:286px;border-left-width:3.5px;border-right-width:3.5px;border-top-width:4.5px"></div>
<div class="a" style="left:589px;top:281.5px;width:61px;height:12px;border:1px solid #a8a8a8;background:#181818"></div>
<div class="a" style="left:592px;top:284px;font-size:7.5px;line-height:8px;color:#e0e0e0;transform:scaleX(.78);transform-origin:0 0;white-space:pre">Raw  2</div>
<div class="tri" style="left:640px;top:286px;border-left-width:3.5px;border-right-width:3.5px;border-top-width:4.5px"></div>
<div class="a" style="left:652px;top:282px;width:10px;height:12px;border-radius:1px;background:linear-gradient(#363636,#262626)"></div>
<div class="a" style="left:665px;top:282px;width:10px;height:12px;border-radius:1px;background:linear-gradient(#363636,#262626)"></div>
<div class="a" style="left:679px;top:282px;width:10px;height:12px;border-radius:1px;background:linear-gradient(#363636,#262626)"></div>
<div class="a" style="left:690px;top:282px;width:10px;height:12px;border-radius:1px;background:linear-gradient(#363636,#262626)"></div>
<div class="a" style="left:701px;top:282px;width:10px;height:12px;border-radius:1px;background:linear-gradient(#363636,#262626)"></div>
<div class="a" style="left:731px;top:282px;width:10px;height:12px;border-radius:1px;background:linear-gradient(#363636,#262626)"></div>
<div class="a" style="left:745px;top:282px;width:10px;height:12px;border-radius:1px;background:linear-gradient(#363636,#262626)"></div>
<div class="a" style="left:677px;top:282px;width:1px;height:13px;background:#555"></div>
<svg style="left:650px;top:282px" width="100" height="13"><g fill="none" stroke="#c0c0c0" stroke-width=".8"><rect x="4" y="3" width="4" height="4"/><rect x="6" y="6" width="4" height="4"/><path d="M18 3h3v6"/><rect x="19" y="7" width="3.5" height="3" fill="#c0c0c0"/><circle cx="33.5" cy="5.5" r="2.3"/><path d="M35 7l2.5 3"/><circle cx="44.5" cy="5.5" r="2.3"/><path d="M46 7l2.5 3"/><rect x="54" y="4" width="5" height="4" fill="#c8c8c8"/></g><path d="M85 2l2.5 4-2.5 4-2-4z" fill="#f0a040"/><rect x="85" y="5" width="4" height="5" fill="#1a6a6a"/></svg>
<div class="a" style="left:715px;top:284px;font-size:7.5px;line-height:8px;color:#d0d0d0;transform:scaleX(.8);transform-origin:0 0">60%</div>
<div class="a" style="left:500px;top:295px;width:250px;height:258px;background:#000;border:1px solid #d8b428"></div>
<svg style="left:501px;top:296px" width="248" height="256"><defs><filter id="bl4" x="-50%" y="-50%" width="200%" height="200%"><feGaussianBlur stdDeviation="5"/></filter><filter id="bl2" x="-50%" y="-50%" width="200%" height="200%"><feGaussianBlur stdDeviation="2"/></filter><filter id="noi" x="0" y="0" width="100%" height="100%"><feTurbulence type="fractalNoise" baseFrequency="0.15 0.05" numOctaves="2" seed="3"/><feColorMatrix type="matrix" values="0 0 0 0 1  0 0 0 0 1  0 0 0 0 1  0 0 0 .9 -.45"/></filter><linearGradient id="lg1" x1="0" x2="1" y1="0" y2="0"><stop offset="0" stop-color="#5a58ae"/><stop offset=".25" stop-color="#6c6abc"/><stop offset="1" stop-color="#7472c2"/></linearGradient><linearGradient id="lg2" x1="0" x2="1" y1="0" y2="0"><stop offset="0" stop-color="#7270c0"/><stop offset=".3" stop-color="#6462b4"/><stop offset=".9" stop-color="#5856aa"/><stop offset="1" stop-color="#403e94"/></linearGradient><clipPath id="cl1"><rect x="0" y="0" width="52" height="256"/></clipPath><clipPath id="cl2"><path d="M181 0H227.5L227 60L226 120L226.5 180L225 256H181Z"/></clipPath></defs><g clip-path="url(#cl1)"><rect x="0" y="0" width="52" height="256" fill="url(#lg1)"/><path d="M60 45 C50 75 30 95 22 130 C14 160 6 190 6 256 H60Z" fill="#a2a0ea" filter="url(#bl4)"/><path d="M-10 170 C10 185 30 200 40 256 H-10Z" fill="#7472c4" opacity=".75" filter="url(#bl4)"/></g><g clip-path="url(#cl2)"><rect x="181" y="0" width="47" height="256" fill="url(#lg2)"/><path d="M170 88 C195 95 200 115 196 135 C193 150 188 170 190 256 L170 256Z" fill="#7876c6" filter="url(#bl4)"/><path d="M176 88 C190 92 199 98 200 112 C201 128 196 145 190 165 L176 168Z" fill="#9c9ae4" filter="url(#bl2)"/></g><rect x="0" y="0" width="52" height="256" filter="url(#noi)" opacity=".25"/><rect x="181" y="0" width="47" height="256" filter="url(#noi)" opacity=".25" clip-path="url(#cl2)"/></svg>
<div class="a" style="left:553px;top:296px;width:128px;height:256px;background:repeating-linear-gradient(to bottom,rgba(0,0,0,0) 0 1px,rgba(225,215,100,.7) 1px 2.1px,rgba(0,0,0,0) 2.1px 3.02px),linear-gradient(to right,rgba(0,0,0,0) 0,rgba(0,0,0,0) 17px,rgba(120,230,240,.85) 23px,rgba(190,245,150,.9) 28px,rgba(245,240,140,.9) 33px,rgba(245,195,140,.85) 42px,rgba(244,176,140,.82) 56px,rgba(244,176,140,.82) 72px,rgba(245,195,140,.85) 80px,rgba(245,240,140,.9) 86px,rgba(190,245,150,.9) 89px,rgba(120,230,240,.85) 93px,rgba(0,0,0,0) 100px),linear-gradient(#9088d8,#9890e0)"></div>
<svg style="left:553px;top:296px" width="128" height="256"><defs><filter id="bl6" x="-50%" y="-50%" width="200%" height="200%"><feGaussianBlur stdDeviation="6"/></filter></defs><g filter="url(#bl6)" fill="#968ecc" opacity=".9"><ellipse cx="14" cy="75" rx="22" ry="42"/><ellipse cx="116" cy="125" rx="22" ry="55"/><ellipse cx="60" cy="40" rx="10" ry="20" opacity=".3"/></g></svg>
<div class="a" style="left:613px;top:395px;width:9px;height:52px;border-radius:0 4px 4px 0/0 20px 20px 0;background:linear-gradient(rgba(245,190,140,.9),rgba(230,240,140,.9) 12%,rgba(170,240,170,.9) 25%,rgba(130,220,240,.9) 40%,rgba(140,180,240,.9) 75%,rgba(170,240,170,.9) 92%,rgba(240,240,150,.9))"></div>
<svg style="left:553px;top:0" width="128" height="560"><rect x="0" y="409.5" width="128" height="1.2" fill="rgba(235,245,255,.6)"/><rect x="0" y="412.5" width="128" height="1.2" fill="rgba(235,245,255,.6)"/><rect x="0" y="415.5" width="128" height="1.2" fill="rgba(235,245,255,.6)"/><rect x="0" y="418.5" width="128" height="1.2" fill="rgba(235,245,255,.6)"/><rect x="0" y="421.5" width="128" height="1.2" fill="rgba(215,40,100,.65)"/><rect x="0" y="424.5" width="128" height="1.2" fill="rgba(215,40,100,.65)"/><rect x="0" y="427.5" width="128" height="1.2" fill="rgba(215,40,100,.65)"/><rect x="0" y="430.5" width="128" height="1.2" fill="rgba(215,40,100,.65)"/><rect x="0" y="433.5" width="128" height="1.2" fill="rgba(215,40,100,.65)"/><g fill="none" stroke="#e8f0f0" stroke-width="1"><path d="M118 402l10 11.5M118 405.5l9 9.5M118 409l7 6M118 426l10 -11.5M118 422.5l9 -9.5M118 419l7 -6"/></g></svg>
<div class="a" style="left:552px;top:296px;width:1px;height:256px;background:#e02848"></div>
<div class="a" style="left:681px;top:296px;width:1px;height:256px;background:#e02848"></div>
<svg style="left:500px;top:295px" width="250" height="258"><g fill="#b0a890" stroke="#303030" stroke-width=".75"><circle cx="81.2" cy="2.8" r="1.1"/><circle cx="90.9" cy="5.9" r="1.1"/><circle cx="96.5" cy="8.9" r="1.1"/><circle cx="80.9" cy="11.6" r="1.1"/><circle cx="82.7" cy="14.8" r="1.1"/><circle cx="95.2" cy="18.1" r="1.1"/><circle cx="94.9" cy="21.3" r="1.1"/><circle cx="95.8" cy="23.9" r="1.1"/><circle cx="97.7" cy="27.0" r="1.1"/><circle cx="94.3" cy="30.0" r="1.1"/><circle cx="112.0" cy="33.3" r="1.1"/><circle cx="92.8" cy="36.2" r="1.1"/><circle cx="112.0" cy="39.2" r="1.1"/><circle cx="111.7" cy="42.2" r="1.1"/><circle cx="97.7" cy="45.0" r="1.1"/><circle cx="113.5" cy="48.1" r="1.1"/><circle cx="97.7" cy="51.2" r="1.1"/><circle cx="96.2" cy="54.2" r="1.1"/><circle cx="96.5" cy="57.3" r="1.1"/><circle cx="57.9" cy="60.5" r="1.1"/><circle cx="67.6" cy="63.5" r="1.1"/><circle cx="132.5" cy="65.8" r="1.1"/><circle cx="57.9" cy="69.7" r="1.1"/><circle cx="57.9" cy="72.3" r="1.1"/><circle cx="111.7" cy="75.5" r="1.1"/><circle cx="90.5" cy="78.8" r="1.1"/><circle cx="112.0" cy="81.6" r="1.1"/><circle cx="83.7" cy="84.6" r="1.1"/><circle cx="112.0" cy="87.8" r="1.1"/><circle cx="81.8" cy="90.8" r="1.1"/><circle cx="82.2" cy="93.8" r="1.1"/><circle cx="82.2" cy="96.9" r="1.1"/><circle cx="112.5" cy="99.5" r="1.1"/><circle cx="112.5" cy="102.6" r="1.1"/><circle cx="112.5" cy="105.6" r="1.1"/><circle cx="112.5" cy="108.6" r="1.1"/><circle cx="112.5" cy="111.6" r="1.1"/><circle cx="112.5" cy="114.6" r="1.1"/><circle cx="112.5" cy="117.6" r="1.1"/><circle cx="112.5" cy="120.7" r="1.1"/><circle cx="112.5" cy="123.7" r="1.1"/><circle cx="112.5" cy="126.7" r="1.1"/><circle cx="112.5" cy="129.7" r="1.1"/><circle cx="112.5" cy="132.7" r="1.1"/><circle cx="112.5" cy="135.8" r="1.1"/><circle cx="112.5" cy="138.8" r="1.1"/><circle cx="112.5" cy="141.8" r="1.1"/><circle cx="112.5" cy="144.8" r="1.1"/><circle cx="112.5" cy="147.8" r="1.1"/><circle cx="112.5" cy="150.8" r="1.1"/><circle cx="58.8" cy="157.5" r="1.1"/><circle cx="58.8" cy="160.6" r="1.1"/><circle cx="58.8" cy="163.8" r="1.1"/><circle cx="58.8" cy="166.9" r="1.1"/><circle cx="58.8" cy="170.0" r="1.1"/><circle cx="58.8" cy="173.1" r="1.1"/><circle cx="58.8" cy="176.2" r="1.1"/><circle cx="83.5" cy="178.8" r="1.1"/><circle cx="97.7" cy="182.0" r="1.1"/><circle cx="128.8" cy="184.9" r="1.1"/><circle cx="62.0" cy="187.9" r="1.1"/><circle cx="62.0" cy="190.7" r="1.1"/><circle cx="79.4" cy="194.1" r="1.1"/><circle cx="97.7" cy="197.0" r="1.1"/><circle cx="64.8" cy="200.4" r="1.1"/><circle cx="96.2" cy="203.1" r="1.1"/><circle cx="68.7" cy="206.3" r="1.1"/><circle cx="97.5" cy="208.5" r="1.1"/><circle cx="97.5" cy="211.5" r="1.1"/><circle cx="97.5" cy="214.5" r="1.1"/><circle cx="97.5" cy="217.5" r="1.1"/><circle cx="97.5" cy="220.5" r="1.1"/><circle cx="97.5" cy="223.5" r="1.1"/><circle cx="90.5" cy="226.8" r="1.1"/><circle cx="91.5" cy="230.4" r="1.1"/><circle cx="57.9" cy="233.4" r="1.1"/><circle cx="90.5" cy="236.6" r="1.1"/><circle cx="90.9" cy="239.8" r="1.1"/><circle cx="92.5" cy="245.2" r="1.1"/><circle cx="91.5" cy="251.6" r="1.1"/><circle cx="84.0" cy="255.0" r="1.1"/><circle cx="90.5" cy="257.5" r="1.1"/></g></svg>
<div class="a" style="left:503.5px;top:298px;width:11px;height:15px;border-radius:1.5px;background:linear-gradient(#f8d070,#e8a828)"></div><div class="a" style="left:516px;top:298px;width:11px;height:15px;border-radius:1.5px;background:linear-gradient(#3a3a3a,#262626)"></div><div class="a" style="left:528.5px;top:298px;width:11px;height:15px;border-radius:1.5px;background:linear-gradient(#3a3a3a,#262626)"></div><div class="a" style="left:541px;top:298px;width:11px;height:15px;border-radius:1.5px;background:linear-gradient(#3a3a3a,#262626)"></div><svg style="left:500px;top:298px" width="60" height="20"><circle cx="9" cy="5" r="1.1" fill="#e84020"/><polygon points="7.8,6.5 10.2,6.5 12.5,12 5.5,12" fill="url(#rbv)"/><polygon points="19.5,4 20.5,4 22,12 18,12" fill="url(#rbv)"/><polygon points="24,4 25,4 26.5,12 22.5,12" fill="url(#rbv)"/><polygon points="33.5,4.5 35,4.5 38,12.5 30.5,12.5" fill="url(#rbv)"/><rect x="30" y="8" width="8.5" height=".8" fill="#eee"/><circle cx="37.5" cy="5" r="1" fill="none" stroke="#ccc" stroke-width=".6"/><polygon points="45.5,3.5 47,3.5 50,10.5 43,10.5" fill="url(#cone)"/><rect x="43" y="10.8" width="7.5" height="1.5" fill="url(#conebar)"/></svg>
<div class="a" style="left:503px;top:315px;width:19.5px;height:11px;background:linear-gradient(#f8d070,#e8a828)"></div>
<div class="a" style="left:522.5px;top:315px;width:19.5px;height:11px;background:linear-gradient(#4a4a4a,#3a3a3a)"></div>
<svg style="left:503px;top:315px" width="40" height="11"><g fill="none" stroke="#fff" stroke-width=".7"><path d="M6 6l2-2 2 1.5 1.5-1 1.5 1.5M6 6h7"/><path d="M25 6l2-2 2 1.5 1.5-1 1.5 1.5M25 6h7M28 2v3"/></g><g font-size="4" fill="#fff" font-weight="bold"><text x="7.5" y="10">ON</text><text x="26" y="10">OFF</text></g></svg>
<div class="a" style="left:697px;top:299px;width:26px;height:14.5px;border-radius:1.5px;background:linear-gradient(#3c3c3c,#282828)"></div>
<div class="a" style="left:736px;top:299px;width:11px;height:14.5px;border-radius:1.5px;background:linear-gradient(#3c3c3c,#282828)"></div>
<svg style="left:697px;top:299px" width="52" height="15"><g fill="none" stroke="#c8c8c8" stroke-width=".8"><rect x="2" y="4" width="5" height="6"/><path d="M2.5 9c1.2 0 1.2-3.5 2-3.5s.8 3.5 2 3.5"/><rect x="10.5" y="4" width="5" height="6"/><path d="M14.5 5l-2.5 2 2.5 2"/><rect x="19" y="4" width="5" height="6"/></g><circle cx="24" cy="9.5" r="1.8" fill="#eee"/><g fill="#ddd"><path d="M40 4h3l-3 3zM46 4h-3l3 3zM40 11h3l-3-3zM46 11h-3l3-3z"/></g><g stroke="#ddd" stroke-width="1"><path d="M41 5l1.8 1.8M45 5l-1.8 1.8M41 10l1.8-1.8M45 10l-1.8-1.8"/></g></svg>
<div class="a" style="left:503px;top:535px;width:11.5px;height:15px;border-radius:1.5px;background:linear-gradient(#404040,#2a2a2a)"></div><svg style="left:500px;top:505px" width="130" height="50"><polygon points="13.12,36.67 13.20,37.48 11.97,38.08 11.80,38.65 12.50,39.82 11.98,40.46 10.69,40.01 10.17,40.29 9.83,41.62 9.02,41.70 8.42,40.47 7.85,40.30 6.68,41.00 6.04,40.48 6.49,39.19 6.21,38.67 4.88,38.33 4.80,37.52 6.03,36.92 6.20,36.35 5.50,35.18 6.02,34.54 7.31,34.99 7.83,34.71 8.17,33.38 8.98,33.30 9.58,34.53 10.15,34.70 11.32,34.00 11.96,34.52 11.51,35.81 11.79,36.33" fill="#e8e8e8"/><circle cx="9" cy="37.5" r="1.6" fill="#333"/></svg><div class="a" style="left:518px;top:537px;width:8px;height:10px;border-radius:1px;background:#2c2c2c"></div><svg style="left:518px;top:537px" width="8" height="10"><path d="M.8 5l2.2-2v4zM7.2 5l-2.2-2v4z" fill="#e8e8e8"/><path d="M2.5 5h3" stroke="#e8e8e8" stroke-width="1"/></svg><div class="a" style="left:530px;top:540.5px;width:61px;height:6.5px;border:1px solid #222;box-shadow:inset 0 0 0 1px #9898b8;background:linear-gradient(to right,#0000f0 0,#0000f0 42px,#f00000 42px)"></div><svg style="left:569px;top:535px" width="9" height="11"><path d="M1.8 1.2h5v5.5l-2.5 3-2.5-3z" fill="#d8d8d8" stroke="#222" stroke-width=".8"/></svg><div class="a" style="left:529px;top:525px;font-family:'Liberation Mono',monospace;font-size:7px;line-height:7px;color:#303030">8.2</div><div class="a" style="left:568px;top:525px;font-family:'Liberation Mono',monospace;font-size:7px;line-height:7px;color:#303030">8.5 mm</div><div class="a" style="left:596px;top:536.5px;width:9px;height:10.5px;border-radius:1px;background:#2c2c2c"></div><svg style="left:596px;top:536.5px" width="9" height="11"><path d="M1.5 3v5M7.5 3v5M2 5.5h5" stroke="#ccc" stroke-width=".7"/><path d="M2.2 5.5l1.5-1.2v2.4zM6.8 5.5l-1.5-1.2v2.4z" fill="#ddd"/></svg><div class="a" style="left:608px;top:535px;width:11.5px;height:15px;border-radius:1.5px;background:linear-gradient(#404040,#2a2a2a)"></div><svg style="left:608px;top:535px" width="12" height="15"><path d="M4 3v9M8 3v9" stroke-width="1.1" stroke="#3aa0f0"/><path d="M8 3v9" stroke-width="1.1" stroke="#f08020"/><path d="M2.3 9.5l1.7 3 1.7-3zM2.3 5l1.7-3 1.7 3z" fill="#3aa0f0"/><path d="M6.3 9.5l1.7 3 1.7-3zM6.3 5l1.7-3 1.7 3z" fill="#f08020"/></svg>
<svg style="left:676px;top:536px" width="10" height="14"><path d="M4.5 1l4 6-4 5.5-4-5.5z" fill="url(#dia)" stroke="#222" stroke-width=".6"/></svg>
<svg style="left:689px;top:542px" width="44" height="6"><rect x="0" y="0" width="44" height="6" rx="1" fill="#a8a8a8"/><rect x="1.00" y="1" width="3.4" height="4" fill="#3a3a3a"/><rect x="5.25" y="1" width="3.4" height="4" fill="#3a3a3a"/><rect x="9.50" y="1" width="3.4" height="4" fill="#3a3a3a"/><rect x="13.75" y="1" width="3.4" height="4" fill="#3a3a3a"/><rect x="18.00" y="1" width="3.4" height="4" fill="#3a3a3a"/><rect x="22.25" y="1" width="3.4" height="4" fill="#3a3a3a"/><rect x="26.50" y="1" width="3.4" height="4" fill="#3a3a3a"/><rect x="30.75" y="1" width="3.4" height="4" fill="#3a3a3a"/><rect x="35.00" y="1" width="3.4" height="4" fill="#3a3a3a"/><rect x="39.25" y="1" width="3.4" height="4" fill="#3a3a3a"/></svg>
<svg style="left:715px;top:535px" width="9" height="11"><path d="M2 1.2h5v5.5l-2.5 3-2.5-3z" fill="#d8d8d8" stroke="#222" stroke-width=".8"/></svg>
<svg style="left:737px;top:536px" width="10" height="14"><path d="M5 1.5l4 5.5-4 5-4-5z" fill="url(#gd)"/></svg>
<div class="a" style="left:500px;top:553px;width:250px;height:7px;background:#4c4c4c"></div>
<div class="a" style="left:500px;top:553px;width:6px;height:7px;background:#3a3a3a;border:1px solid #333"></div>
<div class="a" style="left:613px;top:553px;width:80px;height:7px;background:#555;border-left:1px solid #3c3c3c;border-right:1px solid #3c3c3c"></div>
<div class="a" style="left:744px;top:553px;width:6px;height:7px;background:#3a3a3a;border:1px solid #333"></div>
</body></html>
